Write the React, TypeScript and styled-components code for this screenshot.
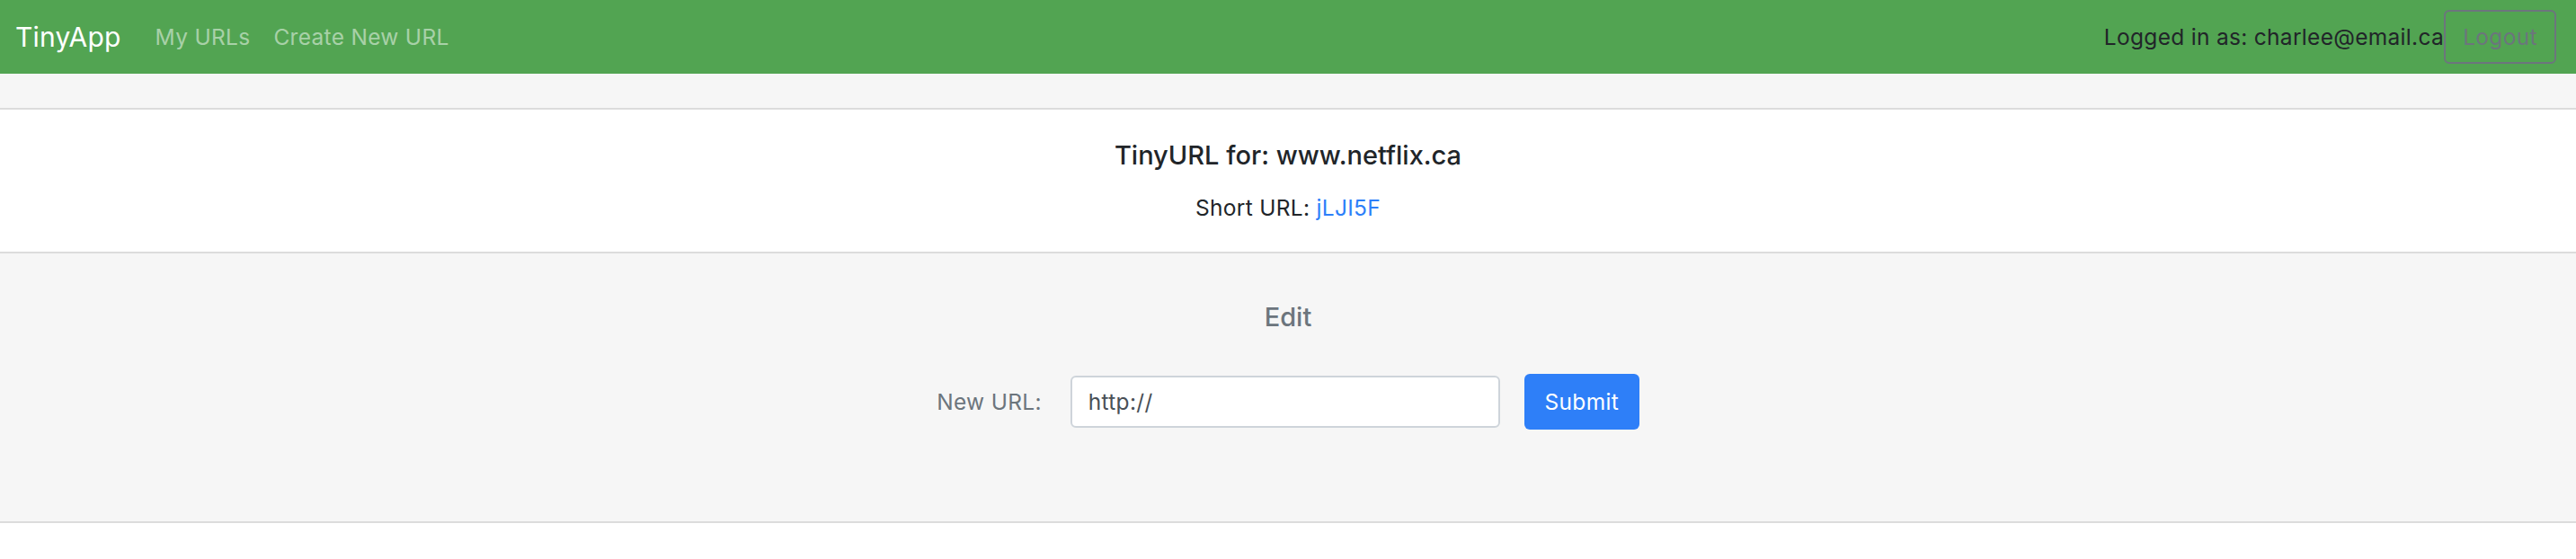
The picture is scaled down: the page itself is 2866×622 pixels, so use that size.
import React from 'react';
import styled, { createGlobalStyle } from 'styled-components';

const GlobalStyle = createGlobalStyle`
  html, body {
    margin: 0;
    padding: 0;
    background: #ffffff;
  }
  body {
    font-family: Inter, "Liberation Sans", Arial, sans-serif;
    font-size: 24.5px;
    letter-spacing: 0.3px;
    color: #212529;
  }
  * {
    box-sizing: border-box;
  }
`;

const Navbar = styled.nav`
  display: flex;
  align-items: center;
  justify-content: space-between;
  height: 82px;
  padding: 0 22px 0 17px;
  background-color: #52a452;
`;

const NavLeft = styled.div`
  display: flex;
  align-items: center;
`;

const Brand = styled.a`
  font-size: 30px;
  line-height: 36px;
  letter-spacing: 0.2px;
  color: #ffffff;
  text-decoration: none;
  margin-right: 38px;
`;

const NavLink = styled.a`
  line-height: 34px;
  color: rgba(255, 255, 255, 0.5);
  text-decoration: none;
  margin-right: 26px;
`;

const NavRight = styled.div`
  display: flex;
  align-items: center;
`;

const LoggedIn = styled.span`
  line-height: 34px;
  color: #212529;
`;

const OutlineButton = styled.button`
  width: 125px;
  height: 60px;
  padding: 0;
  border: 2px solid #6c757d;
  border-radius: 6px;
  background: transparent;
  color: #6c757d;
  font-family: inherit;
  font-size: 24.5px;
  letter-spacing: 0.3px;
`;

const TopBand = styled.div`
  height: 40px;
  background-color: #f6f6f6;
  border-bottom: 2px solid #dcdcdc;
`;

const InfoSection = styled.section`
  display: flex;
  flex-direction: column;
  align-items: center;
  height: 160px;
  padding-top: 33px;
  background-color: #ffffff;
  border-bottom: 2px solid #dcdcdc;
`;

const Title = styled.h3<{ $muted?: boolean }>`
  margin: 0;
  font-size: 29px;
  line-height: 36px;
  font-weight: 500;
  letter-spacing: 0;
  color: ${({ $muted }) => ($muted ? '#6c757d' : '#212529')};
`;

const ShortLine = styled.p`
  margin: 23px 0 0;
  line-height: 34px;
`;

const ShortLink = styled.a`
  color: #2d7ff9;
  text-decoration: none;
`;

const EditSection = styled.section`
  display: flex;
  flex-direction: column;
  align-items: center;
  height: 300px;
  padding-top: 53px;
  background-color: #f6f6f6;
  border-bottom: 2px solid #dcdcdc;
`;

const FormRow = styled.form`
  display: flex;
  align-items: center;
  margin-top: 45px;
`;

const Label = styled.label`
  line-height: 34px;
  color: #6c757d;
  margin-right: 32px;
`;

const UrlInput = styled.input`
  width: 478px;
  height: 58px;
  padding: 0 18px;
  border: 2px solid #ced4da;
  border-radius: 6px;
  background: #ffffff;
  color: #495057;
  font-family: inherit;
  font-size: 24.5px;
  letter-spacing: 0.3px;
  outline: none;
`;

const SubmitButton = styled.button`
  width: 128px;
  height: 62px;
  margin-left: 27px;
  padding: 0;
  border: none;
  border-radius: 6px;
  background-color: #2e7ff8;
  color: #ffffff;
  font-family: inherit;
  font-size: 24.5px;
  letter-spacing: 0.3px;
`;

export default function App() {
  return (
    <>
      <GlobalStyle />
      <Navbar>
        <NavLeft>
          <Brand href="#">TinyApp</Brand>
          <NavLink href="#">My URLs</NavLink>
          <NavLink href="#">Create New URL</NavLink>
        </NavLeft>
        <NavRight>
          <LoggedIn>Logged in as: charlee@email.ca</LoggedIn>
          <OutlineButton type="button">Logout</OutlineButton>
        </NavRight>
      </Navbar>
      <TopBand />
      <InfoSection>
        <Title>TinyURL for: www.netflix.ca</Title>
        <ShortLine>
          Short URL: <ShortLink href="#">jLJI5F</ShortLink>
        </ShortLine>
      </InfoSection>
      <EditSection>
        <Title $muted>Edit</Title>
        <FormRow onSubmit={(e) => e.preventDefault()}>
          <Label htmlFor="longURL">New URL:</Label>
          <UrlInput id="longURL" type="text" defaultValue="http://" />
          <SubmitButton type="submit">Submit</SubmitButton>
        </FormRow>
      </EditSection>
    </>
  );
}
